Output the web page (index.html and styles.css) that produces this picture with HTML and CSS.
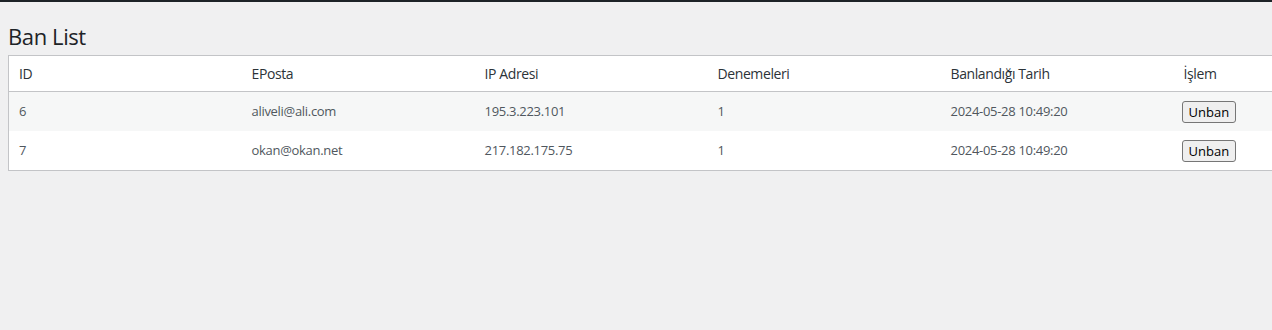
FILE: index.html
```html
<!DOCTYPE html>
<html lang="tr">
<head>
<meta charset="utf-8">
<title>Ban List</title>
<link rel="stylesheet" href="styles.css">
</head>
<body>
<div class="topbar"></div>
<div class="wrap">
  <h1 class="title">Ban List</h1>
  <div class="clip">
    <table class="bans">
      <colgroup>
        <col class="c1"><col class="c2"><col class="c3"><col class="c4"><col class="c5"><col class="c6">
      </colgroup>
      <thead>
        <tr><th>ID</th><th>EPosta</th><th>IP Adresi</th><th>Denemeleri</th><th>Banlandığı Tarih</th><th>İşlem</th></tr>
      </thead>
      <tbody>
        <tr class="alt"><td>6</td><td>aliveli@ali.com</td><td>195.3.223.101</td><td>1</td><td>2024-05-28 10:49:20</td><td><button class="btn">Unban</button></td></tr>
        <tr><td>7</td><td>okan@okan.net</td><td>217.182.175.75</td><td>1</td><td>2024-05-28 10:49:20</td><td><button class="btn">Unban</button></td></tr>
      </tbody>
    </table>
  </div>
</div>
</body>
</html>
```
FILE: styles.css
```css
html { overflow: hidden; }
body {
  margin: 0;
  background: #f0f0f1;
  font-family: "Open Sans", "Noto Sans", sans-serif;
  color: #3c434a;
  font-size: 13px;
}
.topbar { height: 2px; background: #1d2327; }
.wrap { padding: 10px 0 0 8px; }
.clip { overflow: hidden; }
.title {
  margin: 0;
  padding: 9px 0 4px 0;
  font-size: 22px;
  letter-spacing: -0.4px;
  font-weight: 400;
  line-height: 30px;
  color: #1d2327;
}
.bans {
  width: 1398px;
  table-layout: fixed;
  border-collapse: collapse;
  background: #fff;
  border: 1px solid #c3c4c7;
}
.bans col { width: 233px; }
.bans th {
  text-align: left;
  font-weight: 400;
  font-size: 14px;
  letter-spacing: -0.4px;
  color: #2c3338;
  padding: 8px 10px;
  height: 19px;
  line-height: 19px;
  border-bottom: 1px solid #c3c4c7;
}
.bans td {
  padding: 8px 10px;
  height: 22px;
  line-height: 19px;
  letter-spacing: -0.3px;
  color: #50575e;
  vertical-align: middle;
}
.bans tr.alt td { background: #f6f7f7; }
.btn {
  font-family: "Open Sans", "Noto Sans", sans-serif;
  font-size: 13px;
  color: #000;
  background: #efefef;
  border: 1px solid #767676;
  border-radius: 3px;
  padding: 1px 6px;
  line-height: 18px;
  margin-top: 1px;
  margin-left: -2px;
}
```
